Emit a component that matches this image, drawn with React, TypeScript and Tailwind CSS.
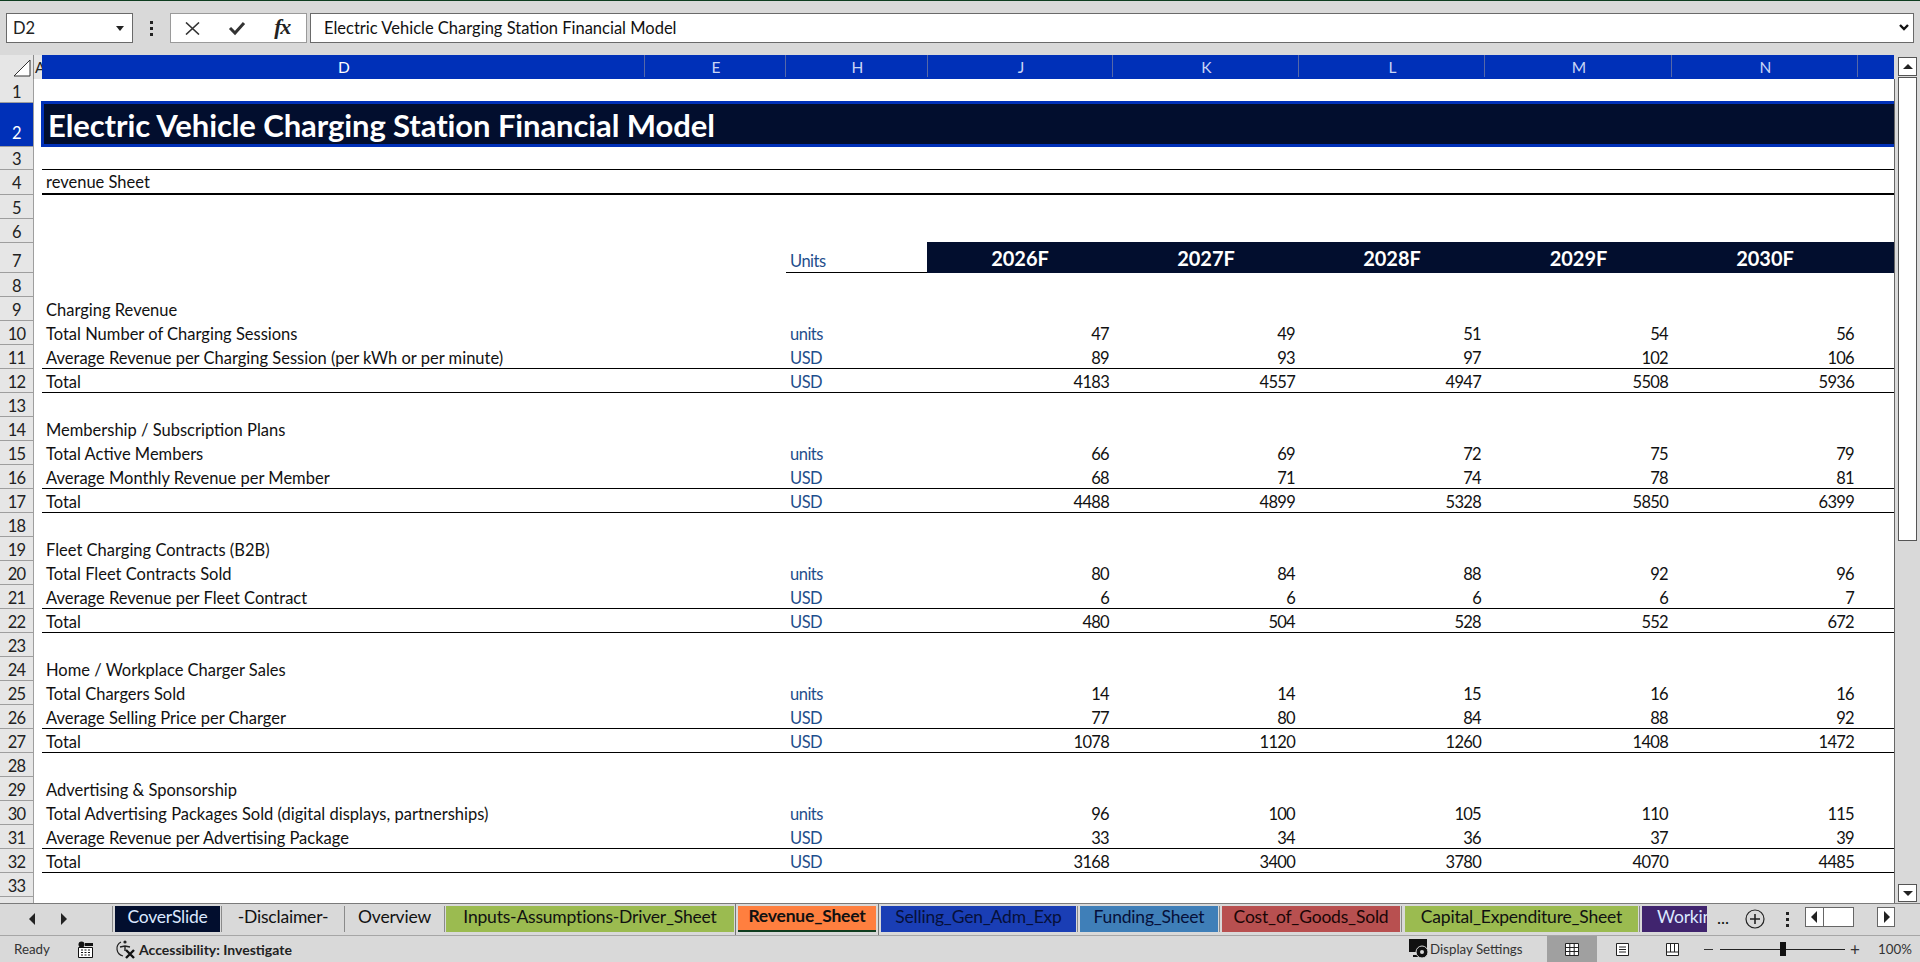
const COLS = ["D", "E", "H", "J", "K", "L", "M", "N"];
const BODY_GRID = "grid w-[1852px] grid-cols-[603px_141px_142px_185px_186px_186px_187px_186px_36px]";

type DataRow = { n: number; label?: string; unit?: string; vals?: number[]; rule?: boolean };

const block = (start: number, title: string, a: string, b: string, av: number[], bv: number[], tv: number[]): DataRow[] => [
  { n: start, label: title },
  { n: start + 1, label: a, unit: "units", vals: av },
  { n: start + 2, label: b, unit: "USD", vals: bv, rule: true },
  { n: start + 3, label: "Total", unit: "USD", vals: tv, rule: true },
  { n: start + 4 },
];

const ROWS: DataRow[] = [
  { n: 8 },
  ...block(9, "Charging Revenue", "Total Number of Charging Sessions", "Average Revenue per Charging Session (per kWh or per minute)", [47, 49, 51, 54, 56], [89, 93, 97, 102, 106], [4183, 4557, 4947, 5508, 5936]),
  ...block(14, "Membership / Subscription Plans", "Total Active Members", "Average Monthly Revenue per Member", [66, 69, 72, 75, 79], [68, 71, 74, 78, 81], [4488, 4899, 5328, 5850, 6399]),
  ...block(19, "Fleet Charging Contracts (B2B)", "Total Fleet Contracts Sold", "Average Revenue per Fleet Contract", [80, 84, 88, 92, 96], [6, 6, 6, 6, 7], [480, 504, 528, 552, 672]),
  ...block(24, "Home / Workplace Charger Sales", "Total Chargers Sold", "Average Selling Price per Charger", [14, 14, 15, 16, 16], [77, 80, 84, 88, 92], [1078, 1120, 1260, 1408, 1472]),
  ...block(29, "Advertising & Sponsorship", "Total Advertising Packages Sold (digital displays, partnerships)", "Average Revenue per Advertising Package", [96, 100, 105, 110, 115], [33, 34, 36, 37, 39], [3168, 3400, 3780, 4070, 4485]),
];

const TABS = [
  { label: "CoverSlide", cls: "w-[105px] ml-[1px] bg-[#020e2e] text-[#dbe8ff]" },
  { label: "-Disclaimer-", cls: "w-[120px] text-[#111]" },
  { label: "Overview", cls: "w-[97px] text-[#111]" },
  { label: "Inputs-Assumptions-Driver_Sheet", cls: "w-[288px] bg-[#9bbb50] text-[#111]" },
  { label: "Selling_Gen_Adm_Exp", cls: "w-[195px] bg-[#1a3eb5] text-[#06103a]" },
  { label: "Funding_Sheet", cls: "w-[138px] ml-[1px] bg-[#3f7fb8] text-[#06103a]" },
  { label: "Cost_of_Goods_Sold", cls: "w-[178px] ml-[1px] bg-[#b85050] text-[#1a0606]" },
  { label: "Capital_Expenditure_Sheet", cls: "w-[233px] ml-[2px] bg-[#9bbb50] text-[#111]" },
];

function Caret({ up = false }: { up?: boolean }) {
  return (
    <svg width="12" height="7" viewBox="0 0 12 7">
      <path d={up ? "M6 1 11 6H1Z" : "M1 1H11L6 6Z"} fill="#222" />
    </svg>
  );
}

function Side({ left = false }: { left?: boolean }) {
  return (
    <svg width="7" height="12" viewBox="0 0 7 12">
      <path d={left ? "M6 0V12L0 6Z" : "M1 0V12L7 6Z"} fill="#222" />
    </svg>
  );
}

function VDots() {
  return (
    <div className="flex flex-col gap-[3px]">
      <div className="h-[3px] w-[3px] bg-[#222]" />
      <div className="h-[3px] w-[3px] bg-[#222]" />
      <div className="h-[3px] w-[3px] bg-[#222]" />
    </div>
  );
}

function FormulaBar() {
  return (
    <div className="flex h-[54px] items-start pl-[6px] pt-[12px]">
      <div className="flex h-[30px] w-[127px] items-center justify-between border border-[#6a6a6a] bg-white pl-[6px] pr-[8px] text-[16.5px] text-[#222]">
        D2
        <svg width="8" height="5" viewBox="0 0 8 5"><path d="M0 0H8L4 5Z" fill="#222" /></svg>
      </div>
      <div className="flex h-[30px] w-[37px] items-center justify-center"><VDots /></div>
      <div className="flex h-[30px] w-[137px] items-center border border-[#9a9a9a] bg-white">
        <div className="flex w-[43px] justify-center">
          <svg width="15" height="13" viewBox="0 0 15 13"><path d="M1 0.5 14 12.5M14 0.5 1 12.5" stroke="#333" strokeWidth="1.6" fill="none" /></svg>
        </div>
        <div className="flex w-[46px] justify-center">
          <svg width="18" height="16" viewBox="0 0 18 16"><path d="M2 8 7 13 16 3" stroke="#333" strokeWidth="3" fill="none" /></svg>
        </div>
        <div className="w-[41px] pb-[2px] pl-[3px] text-center font-[family-name:'Liberation_Serif',serif] text-[22px] font-bold italic leading-none tracking-[-1.5px] text-[#222]">fx</div>
      </div>
      <div className="ml-[3px] flex h-[30px] w-[1604px] items-center justify-between border border-[#6a6a6a] bg-white pl-[13px] pr-[4px] text-[16.5px] text-[#111]">
        Electric Vehicle Charging Station Financial Model
        <svg width="10" height="8" viewBox="0 0 10 8"><path d="M1 1 5 5 9 1" stroke="#111" strokeWidth="2.4" fill="none" /></svg>
      </div>
    </div>
  );
}

function RowHead({ n, selected = false, h, pad = "" }: { n: number; selected?: boolean; h: string; pad?: string }) {
  return (
    <div className={`flex w-[34px] shrink-0 items-end justify-center border-b border-r border-[#9e9e9e] text-[16.5px] leading-[20px] tracking-[-0.7px] ${h} ${pad} ${selected ? "bg-[#0030b8] text-white" : "bg-[#e6e6e6] text-[#222]"}`}>
      {n}
    </div>
  );
}

function ColumnHeader() {
  return (
    <div className="flex h-[24px] w-[1894px]">
      <div className="flex w-[34px] items-end justify-end border-r border-[#8a8a8a] bg-[#e6e6e6] pb-[2px] pr-[2px]">
        <svg width="18" height="18" viewBox="0 0 18 18"><path d="M17 1V17H1Z" fill="white" stroke="#333" strokeWidth="1" /></svg>
      </div>
      <div className="flex w-[8px] items-center overflow-hidden bg-[#e6e6e6] pl-[1px] text-[15px] text-[#222]">A</div>
      <div className={`${BODY_GRID} bg-[#0030b8]`}>
        {COLS.map((c) => (
          <div key={c} className={`flex h-[22px] items-center justify-center border-r border-[#5668a8] pl-[2px] pt-[3px] text-[15.5px] ${c === "D" ? "text-white" : "text-[#c9d6f5]"}`}>
            {c}
          </div>
        ))}
      </div>
    </div>
  );
}

function Row({ row }: { row: DataRow }) {
  return (
    <div className="flex">
      <RowHead n={row.n} h="h-[24px]" />
      <div className="w-[8px]" />
      <div className={`${BODY_GRID} h-[24px] items-end border-b text-[16.5px] leading-[20px] text-[#111] ${row.rule ? "border-black" : "border-transparent"}`}>
        <div className="col-span-2 whitespace-nowrap pl-[4px]">{row.label}</div>
        <div className="pl-[4px] tracking-[-0.5px] text-[#1f4e8c]">{row.unit}</div>
        {row.vals?.map((v, i) => (
          <div key={i} className="pr-[4px] text-right tracking-[-0.7px]">{v}</div>
        ))}
      </div>
    </div>
  );
}

function Sheet() {
  return (
    <div className="flex h-[824px] w-[1895px] flex-col overflow-hidden border-r border-[#666] bg-white">
      {/* rows 1-7 have their own heights */}
      <div className="flex">
        <RowHead n={1} h="h-[24px]" />
      </div>
      <div className="flex">
        <RowHead n={2} selected h="h-[44px]" pad="pb-[3px]" />
        <div className="w-[7px]" />
        <div className="-my-[2px] flex h-[46px] w-[1853px] items-center border-y-[3px] border-l-[3px] border-[#0030b8] bg-[#020e2e] pl-[4px] pt-[3px] text-[31px] font-bold tracking-[-0.1px] text-white">
          Electric Vehicle Charging Station Financial Model
        </div>
      </div>
      <div className="flex">
        <RowHead n={3} h="h-[23px]" />
        <div className="w-[8px]" />
        <div className="h-[23px] w-[1852px] border-b border-black" />
      </div>
      <div className="flex">
        <RowHead n={4} h="h-[25px]" pad="pb-[1px]" />
        <div className="w-[8px]" />
        <div className="flex h-[25px] w-[1852px] items-end border-b-2 border-black pl-[4px] text-[16.5px] leading-[22px] text-[#111]">
          revenue Sheet
        </div>
      </div>
      <div className="flex"><RowHead n={5} h="h-[24px]" /></div>
      <div className="flex"><RowHead n={6} h="h-[24px]" /></div>
      <div className="flex">
        <RowHead n={7} h="h-[30px]" pad="pb-[1px]" />
        <div className="w-[8px]" />
        <div className={`${BODY_GRID} h-[30px]`}>
          <div className="col-span-2" />
          <div className="flex items-end border-b border-black pl-[4px] text-[16.5px] leading-[22px] tracking-[-0.5px] text-[#1f4e8c]">Units</div>
          {["2026F", "2027F", "2028F", "2029F", "2030F"].map((y, i) => (
            <div key={y} className={`-mt-px flex h-[31px] items-center justify-center bg-[#020e2e] text-[20px] font-bold text-white ${i === 0 ? "-ml-px" : ""}`}>{y}</div>
          ))}
          <div className="-mt-px h-[31px] bg-[#020e2e]" />
        </div>
      </div>
      {ROWS.map((r) => (
        <Row key={r.n} row={r} />
      ))}
      <div className="h-[6px] w-[34px] border-r border-[#9e9e9e] bg-[#e6e6e6]" />
    </div>
  );
}

function VScroll() {
  return (
    <div className="flex h-[824px] w-[25px] flex-col justify-between pb-[1px] pl-[3px] pr-[3px]">
      <div className="flex flex-col">
        <div className="-mt-[22px] flex h-[19px] items-center justify-center border border-[#555] bg-white"><Caret up /></div>
        <div className="mt-[1px] h-[464px] border border-[#555] bg-white" />
      </div>
      <div className="flex h-[18px] items-center justify-center border border-[#555] bg-white"><Caret /></div>
    </div>
  );
}

function Sep() {
  return <div className="mx-[1px] h-[26px] w-px shrink-0 bg-[#8a8a8a]" />;
}

function Tab({ label, cls }: { label: string; cls: string }) {
  return <div className={`flex h-[26px] shrink-0 items-center justify-center overflow-hidden whitespace-nowrap pb-[4px] text-[17.5px] tracking-[-0.2px] ${cls}`}>{label}</div>;
}

function TabBar() {
  return (
    <div className="flex h-[32px] items-start border-t border-[#7a7a7a] pt-[2px]">
      <div className="flex h-[26px] w-[111px] shrink-0 items-center gap-[24px] pl-[29px]">
        <Side left />
        <Side />
      </div>
      <Sep />
      <Tab {...TABS[0]} />
      <Sep />
      <Tab {...TABS[1]} />
      <Sep />
      <Tab {...TABS[2]} />
      <Sep />
      <Tab {...TABS[3]} />
      <div className="-mt-[3px] ml-[1px] flex h-[32px] w-[144px] shrink-0 border-x border-t border-[#777] px-[2px] pt-[2px]">
        <div className="flex h-[26px] w-full items-center justify-center border-b-2 border-[#0f3d1f] bg-[#ff7f3f] pb-[3px] text-[17.5px] font-bold tracking-[-0.2px] text-[#111]">Revenue_Sheet</div>
      </div>
      <div className="w-[2px] shrink-0" />
      <Tab {...TABS[4]} />
      <Sep />
      <Tab {...TABS[5]} />
      <Sep />
      <Tab {...TABS[6]} />
      <Sep />
      <Tab {...TABS[7]} />
      <Sep />
      <div className="ml-[1px] flex h-[26px] w-[65px] shrink-0 items-center justify-start overflow-hidden whitespace-nowrap bg-[#40246e] pb-[4px] pl-[15px] text-[17.5px] tracking-[-0.2px] text-[#dbe8ff]">Working_Capital</div>
      <div className="flex h-[26px] w-[32px] shrink-0 items-center justify-center pb-[2px] text-[17px] text-[#111]">...</div>
      <div className="flex h-[26px] w-[32px] shrink-0 items-center justify-center">
        <svg width="20" height="20" viewBox="0 0 20 20"><circle cx="10" cy="10" r="9" fill="none" stroke="#222" strokeWidth="1.2" /><path d="M5 10H15M10 5V15" stroke="#222" strokeWidth="1.6" /></svg>
      </div>
      <div className="flex h-[26px] w-[32px] shrink-0 items-center justify-center"><VDots /></div>
      <div className="ml-[2px] flex h-[20px] shrink-0 translate-y-[1px]">
        <div className="flex h-[20px] w-[19px] items-center justify-center border border-[#666] bg-white"><Side left /></div>
        <div className="h-[20px] w-[30px] border-y border-r border-[#666] bg-white" />
        <div className="ml-[23px] flex h-[20px] w-[18px] items-center justify-center border border-[#666] bg-white"><Side /></div>
      </div>
    </div>
  );
}

function StatusBar() {
  return (
    <div className="flex h-[27px] items-center border-t border-[#a6a6a6] text-[13.3px] text-[#333]">
      <div className="w-[78px] pl-[14px] pt-[1px]">Ready</div>
      <svg width="15" height="17" viewBox="0 0 15 17" className="shrink-0">
        <circle cx="3.5" cy="3.5" r="3" fill="#111" />
        <path d="M7 2H15V5H7Z" fill="#111" />
        <path d="M0.5 6.5H14.5V16.5H0.5Z" fill="white" stroke="#111" />
        <path d="M3 9H5M6.5 9H8.5M10 9H12M3 11.5H5M6.5 11.5H8.5M10 11.5H12M3 14H5M6.5 14H8.5M10 14H12" stroke="#111" />
      </svg>
      <svg width="22" height="20" viewBox="0 0 22 20" className="ml-[22px] shrink-0">
        <path d="M6 3A7.5 7.5 0 0 0 8 17" fill="none" stroke="#222" strokeWidth="1.2" />
        <circle cx="10" cy="3" r="1.6" fill="#222" />
        <path d="M5 8 10 7 15 8M10 7V12" fill="none" stroke="#222" strokeWidth="1.4" />
        <path d="M11 11 19 19M19 11 11 19" stroke="#111" strokeWidth="2.4" />
      </svg>
      <div className="ml-[2px] pt-[1px] text-[14px] font-bold text-[#222]">Accessibility: Investigate</div>
      <div className="flex-1" />
      <svg width="20" height="20" viewBox="0 0 20 20" className="shrink-0">
        <path d="M0 0H18V13H0Z" fill="#111" />
        <path d="M4 17H9" stroke="#111" strokeWidth="2" />
        <circle cx="13" cy="13" r="6" fill="#111" stroke="#d9d9d9" />
        <circle cx="13" cy="13" r="2" fill="#d9d9d9" />
      </svg>
      <div className="ml-[1px] w-[117px] whitespace-nowrap pt-[1px]">Display Settings</div>
      <div className="flex h-[26px] w-[50px] shrink-0 items-center justify-center bg-[#a0a0a0]">
        <svg width="14" height="13" viewBox="0 0 14 13">
          <path d="M0.5 0.5H13.5V12.5H0.5ZM0.5 4.5H13.5M0.5 8.5H13.5M4.8 0.5V12.5M9.2 0.5V12.5" fill="white" stroke="#222" />
        </svg>
      </div>
      <div className="flex w-[50px] shrink-0 justify-center">
        <svg width="13" height="13" viewBox="0 0 13 13"><path d="M0.5 0.5H12.5V12.5H0.5Z" fill="white" stroke="#222" /><path d="M3 4H10M3 6.5H10M3 9H10" stroke="#222" /></svg>
      </div>
      <div className="flex w-[50px] shrink-0 justify-center">
        <svg width="13" height="13" viewBox="0 0 13 13"><path d="M0.5 0.5H12.5V12.5H0.5ZM0.5 9H12.5M4.5 0.5V9M8.5 0.5V9" fill="white" stroke="#222" /></svg>
      </div>
      <div className="ml-[7px] h-px w-[9px] shrink-0 bg-[#333]" />
      <div className="relative ml-[7px] h-px w-[125px] shrink-0 bg-[#222]">
        <div className="absolute -top-[7px] left-[60px] h-[14px] w-[6px] bg-[#111]" />
      </div>
      <div className="ml-[5px] w-[20px] shrink-0 text-[17px] leading-none text-[#333]">+</div>
      <div className="w-[50px] shrink-0 pl-[8px] pt-[1px]">100%</div>
    </div>
  );
}

export default function App() {
  return (
    <div className="flex h-[962px] w-[1920px] flex-col overflow-hidden bg-[#d9d9d9] font-[family-name:Lato,sans-serif]">
      <div className="h-px bg-[#0d3d1f]" />
      <FormulaBar />
      <ColumnHeader />
      <div className="flex">
        <Sheet />
        <VScroll />
      </div>
      <TabBar />
      <StatusBar />
    </div>
  );
}
